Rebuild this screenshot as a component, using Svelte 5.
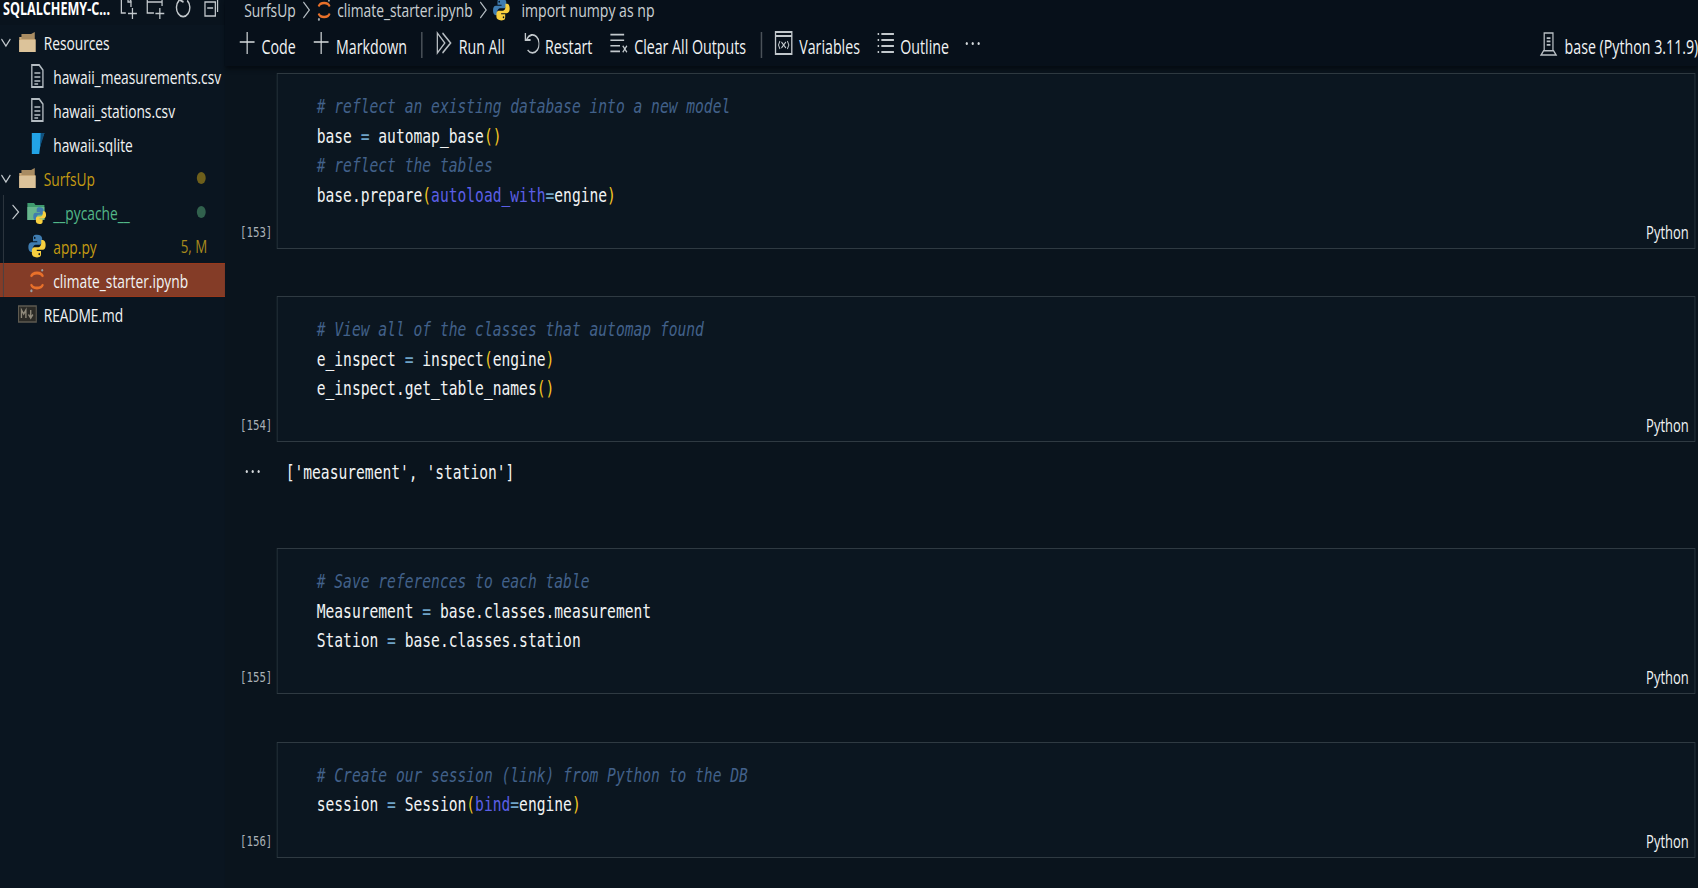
<script>
  const tree = [
    { name: 'Resources', level: 0, icon: 'folder', open: true },
    { name: 'hawaii_measurements.csv', level: 1, icon: 'file' },
    { name: 'hawaii_stations.csv', level: 1, icon: 'file' },
    { name: 'hawaii.sqlite', level: 1, icon: 'db' },
    { name: 'SurfsUp', level: 0, icon: 'folder', open: true, cls: 'mod', dot: 'ymark' },
    { name: '__pycache__', level: 1, icon: 'pyfolder', closed: true, cls: 'untracked', dot: 'gmark' },
    { name: 'app.py', level: 1, icon: 'py', cls: 'mod', badge: '5, M' },
    { name: 'climate_starter.ipynb', level: 1, icon: 'jup', selected: true },
    { name: 'README.md', level: 0, icon: 'md' }
  ];
</script>

{#snippet py(size)}
  <svg width={size} height={size} viewBox="0 0 24 24">
    <path fill="#3f7cb0" d="M12 1.5c-5 0-5 2-5 3.5v2.5h5.300v1H5c-2.500 0-3.800 2-3.800 4.500s1.300 4.500 3.500 4.500h2v-3c0-2 1.700-3.700 3.700-3.700h5c1.600 0 3-1.300 3-3V5c0-2-2.300-3.500-6.400-3.500zM9.200 3.500a1 1 0 1 1 0 2 1 1 0 0 1 0-2z"/>
    <path fill="#f7cf3f" d="M12 22.500c5 0 5-2 5-3.500v-2.500h-5.300v-1H19c2.500 0 3.800-2 3.800-4.500s-1.300-4.500-3.500-4.500h-2v3c0 2-1.700 3.700-3.700 3.700h-5c-1.600 0-3 1.300-3 3V19c0 2 2.300 3.500 6.400 3.500zM14.800 20.500a1 1 0 1 1 0-2 1 1 0 0 1 0 2z"/>
  </svg>
{/snippet}

{#snippet jup(size)}
  <svg width={size} height={size} viewBox="0 0 24 24" fill="none">
    <path stroke="#e8702a" stroke-width="2.600" d="M4.500 8.500c2-4.600 13-4.600 15 0"/>
    <path stroke="#e8702a" stroke-width="2.600" d="M4.500 15.500c2 4.600 13 4.600 15 0"/>
    <circle cx="18.500" cy="2.500" r="1.200" fill="#9aa3a8"/>
    <circle cx="5" cy="21.500" r="1.400" fill="#9aa3a8"/>
  </svg>
{/snippet}

{#snippet folder()}
  <svg width="26" height="24" viewBox="0 0 26 24">
    <path fill="#c9a878" d="M2 7h8l2 2h12v13H2z"/>
    <path fill="#a98c62" d="M5 4h13l5-2v7H5z"/>
    <path fill="#dcc39a" d="M2 10h22v12H2z"/>
  </svg>
{/snippet}

{#snippet fileIcon(name)}
  {#if name === 'folder'}
    {@render folder()}
  {:else if name === 'file'}
    <svg width="24" height="26" viewBox="0 0 24 26" fill="none" stroke="#b4bcc2" stroke-width="1.800">
      <path d="M5 2h10l5 5v17H5z"/>
      <path d="M8.500 10h8M8.500 14h8M8.500 18h8M8.500 21h5" stroke-width="1.500"/>
    </svg>
  {:else if name === 'db'}
    <svg width="24" height="26" viewBox="0 0 24 26">
      <path fill="#22a3e6" d="M5 2h17c-3 5-6 12-7 21H5z"/>
      <path fill="#10507c" d="M17 2h5c-2 6-4 10-6 14z"/>
    </svg>
  {:else if name === 'pyfolder'}
    <span class="pyf">
      <svg width="28" height="28" viewBox="0 0 28 28">
        <path fill="#3f9a6e" d="M1 5h9l2 2h12v15H1z"/>
        <path fill="#68b58d" d="M1 9h23v13H1z"/>
        <g transform="translate(8 8) scale(.8)">
          <path fill="#3f7cb0" d="M12 1.500c-5 0-5 2-5 3.500v2.500h5.300v1H5c-2.500 0-3.800 2-3.800 4.500s1.300 4.500 3.500 4.500h2v-3c0-2 1.700-3.700 3.700-3.700h5c1.600 0 3-1.300 3-3V5c0-2-2.300-3.500-6.400-3.500z"/>
          <path fill="#f7cf3f" d="M12 22.500c5 0 5-2 5-3.500v-2.500h-5.300v-1H19c2.500 0 3.800-2 3.800-4.500s-1.300-4.500-3.500-4.500h-2v3c0 2-1.700 3.700-3.700 3.700h-5c-1.600 0-3 1.300-3 3V19c0 2 2.300 3.500 6.400 3.500z"/>
        </g>
      </svg>
    </span>
  {:else if name === 'py'}
    {@render py(28)}
  {:else if name === 'jup'}
    {@render jup(27)}
  {:else}
    <svg width="26" height="20" viewBox="0 0 26 20">
      <rect x="1" y="2" width="24" height="16" fill="#2b2a26" stroke="#5e5a50" stroke-width="1.500"/>
      <path fill="none" stroke="#8f897b" stroke-width="1.800" d="M5 14V6l3 4 3-4v8M17.500 6v7M14.500 10.500l3 3.500 3-3.500"/>
    </svg>
  {/if}
{/snippet}

<div class="stage">
  <aside class="sidebar">
    <div class="title">
      <span class="title-text">SQLALCHEMY-C...</span>
      <div class="title-actions">
        <svg width="30" height="26" viewBox="0 0 30 26" fill="none" stroke="#c2c8cc" stroke-width="1.700">
          <path d="M11 18H5V2h9l4 4v6M14 2v5h5M20 13v11M14 18.500h12"/>
        </svg>
        <svg width="30" height="26" viewBox="0 0 30 26" fill="none" stroke="#c2c8cc" stroke-width="1.700">
          <path d="M12 18H3V2h7l2 2h11v7M3 7h20M20 13v11M14 18.500h12"/>
        </svg>
        <svg width="30" height="26" viewBox="0 0 30 26" fill="none" stroke="#c2c8cc" stroke-width="1.900">
          <path d="M9 5.500a9 9 0 1 0 11 0M15 0l-5 5 5 2"/>
        </svg>
        <svg width="30" height="26" viewBox="0 0 30 26" fill="none" stroke="#c2c8cc" stroke-width="1.700">
          <path d="M7 7h14v14H7zM11 3h13v14M10 13h8"/>
        </svg>
      </div>
    </div>
    <div class="tree">
      <span class="guide"></span>
      {#each tree as row}
        <div class="row" class:l1={row.level === 1} class:selected={row.selected}>
          <span class="twist">
            {#if row.open}
              <svg width="16" height="16" viewBox="0 0 16 16" fill="none" stroke="#c2c8cc" stroke-width="1.500"><path d="M2 5l6 7 6-7"/></svg>
            {:else if row.closed}
              <svg width="16" height="18" viewBox="0 0 16 18" fill="none" stroke="#c2c8cc" stroke-width="1.500"><path d="M4 2l8 7-8 7"/></svg>
            {/if}
          </span>
          <span class="icon">{@render fileIcon(row.icon)}</span>
          <span class="name {row.cls ?? ''}">{row.name}</span>
          {#if row.dot}<span class="dot {row.dot}"></span>{/if}
          {#if row.badge}<span class="badge">{row.badge}</span>{/if}
        </div>
      {/each}
    </div>
  </aside>

  <main class="main">
    <header class="head">
      <nav class="crumbs">
        <span>SurfsUp</span>
        <svg class="chev" width="12" height="22" viewBox="0 0 12 22" fill="none" stroke="#b4bcc2" stroke-width="1.500"><path d="M2 3l8 8-8 8"/></svg>
        {@render jup(24)}
        <span>climate_starter.ipynb</span>
        <svg class="chev" width="12" height="22" viewBox="0 0 12 22" fill="none" stroke="#b4bcc2" stroke-width="1.500"><path d="M2 3l8 8-8 8"/></svg>
        {@render py(25)}
        <span class="import">import numpy as np</span>
      </nav>
      <div class="toolbar">
        <div class="tool add"><svg width="24" height="26" viewBox="0 0 24 26" fill="none" stroke="#d7dbde" stroke-width="1.600"><path d="M12 2v22M2 12h20"/></svg><span>Code</span></div>
        <div class="tool add"><svg width="24" height="26" viewBox="0 0 24 26" fill="none" stroke="#d7dbde" stroke-width="1.600"><path d="M12 2v22M2 12h20"/></svg><span>Markdown</span></div>
        <i class="sep"></i>
        <div class="tool"><svg width="24" height="26" viewBox="0 0 24 26" fill="none" stroke="#b9bfc4" stroke-width="1.700"><path d="M3 3l10 10L3 23zM10 3l11 10-11 10"/></svg><span>Run All</span></div>
        <div class="tool"><svg width="24" height="26" viewBox="0 0 24 26" fill="none" stroke="#c2c8cc" stroke-width="1.800"><path d="M7 9a9 9 0 1 1 1 11M5 3v7h7"/></svg><span>Restart</span></div>
        <div class="tool"><svg width="26" height="26" viewBox="0 0 28 26" fill="none" stroke="#c2c8cc" stroke-width="1.800"><path d="M2 4h20M2 10h20M2 16h14M2 22h14M20 16l6 7M26 16l-6 7"/></svg><span>Clear All Outputs</span></div>
        <i class="sep"></i>
        <div class="tool"><svg width="26" height="28" viewBox="0 0 26 28" fill="none" stroke="#c2c8cc" stroke-width="1.800"><path d="M2 3h22v22H2zM2 7h22" /><path stroke-width="1.300" d="M8 12l-2 4 2 4M18 12l2 4-2 4M10 13l6 6M16 13l-6 6"/></svg><span>Variables</span></div>
        <div class="tool"><svg width="24" height="26" viewBox="0 0 24 26" fill="none" stroke="#c2c8cc" stroke-width="1.800"><path d="M6 4h17M6 10h17M6 16h17M6 22h17M1 4h2M1 10h2M1 16h2M1 22h2"/></svg><span>Outline</span></div>
        <div class="more" aria-label="More"><b></b><b></b><b></b></div>
        <div class="kernel">
          <svg width="27" height="28" viewBox="0 0 30 30" fill="none" stroke="#b9bfc4" stroke-width="2">
            <path d="M8 2h14v21H8zM3 28l4-5h16l4 5zM12 8h6M12 12h6M12 16h6"/>
          </svg>
          <span>base (Python 3.11.9)</span>
        </div>
      </div>
    </header>

    <div class="notebook">
      <section class="cellrow">
        <span class="count">[153]</span>
        <div class="cell">
          <pre class="code"><em># reflect an existing database into a new model</em>
base <u>=</u> automap_base<s>()</s>
<em># reflect the tables</em>
base.prepare<s>(</s><dfn>autoload_with</dfn><u>=</u>engine<s>)</s></pre>
          <span class="lang">Python</span>
        </div>
      </section>

      <section class="cellrow">
        <span class="count">[154]</span>
        <div class="cell">
          <pre class="code"><em># View all of the classes that automap found</em>
e_inspect <u>=</u> inspect<s>(</s>engine<s>)</s>
e_inspect.get_table_names<s>()</s></pre>
          <span class="lang">Python</span>
        </div>
      </section>

      <div class="output">
        <span class="outdots"><b></b><b></b><b></b></span>
        <pre class="outtext">['measurement', 'station']</pre>
      </div>

      <section class="cellrow">
        <span class="count">[155]</span>
        <div class="cell">
          <pre class="code"><em># Save references to each table</em>
Measurement <u>=</u> base.classes.measurement
Station <u>=</u> base.classes.station</pre>
          <span class="lang">Python</span>
        </div>
      </section>

      <section class="cellrow">
        <span class="count">[156]</span>
        <div class="cell">
          <pre class="code"><em># Create our session (link) from Python to the DB</em>
session <u>=</u> Session<s>(</s><dfn>bind</dfn><u>=</u>engine<s>)</s></pre>
          <span class="lang">Python</span>
        </div>
      </section>
    </div>
  </main>
</div>

<style>
  :global(html), :global(body) {
    margin: 0;
    height: 100%;
    overflow: hidden;
    background: #0a141d;
  }
  .stage {
    width: 2295px;
    height: 888px;
    transform: scaleX(0.74);
    transform-origin: 0 0;
    display: flex;
    background: #0a141d;
    color: #f1f3f4;
    font-family: "Open Sans", "Noto Sans", sans-serif;
    font-size: 18.6px;
    overflow: hidden;
  }
  .sidebar {
    width: 304px;
    flex: none;
    background: #0a1520;
  }
  .title {
    height: 25px;
    display: flex;
    align-items: center;
    padding-left: 4px;
    overflow: hidden;
    background: #09131d;
  }
  .title-text {
    font-weight: 700;
    font-size: 17px;
    color: #fff;
    width: 155px;
    flex: none;
    margin-top: -9px;
    white-space: nowrap;
  }
  .title-actions {
    display: flex;
    gap: 7px;
    margin-top: -9px;
  }
  .tree {
    position: relative;
  }
  .guide {
    position: absolute;
    left: 4px;
    top: 170px;
    height: 102px;
    width: 1px;
    background: #39424a;
  }
  .row {
    height: 34px;
    display: flex;
    align-items: center;
    white-space: nowrap;
    box-sizing: border-box;
  }
  .l1 {
    padding-left: 13px;
  }
  .selected {
    background: #843c27;
    border-top: 1px solid #98391c;
    border-bottom: 1px solid #98391c;
  }
  .twist {
    width: 24px;
    flex: none;
    display: flex;
  }
  .icon {
    width: 26px;
    height: 28px;
    flex: none;
    display: flex;
    align-items: center;
    justify-content: center;
    margin-right: 9px;
  }
  .pyf {
    display: flex;
  }
  .name {
    flex: 1;
  }
  .mod {
    color: #c39a12;
  }
  .untracked {
    color: #52b788;
  }
  .dot {
    width: 12px;
    height: 12px;
    border-radius: 50%;
    margin-right: 26px;
  }
  .ymark {
    background: #6e5f1b;
  }
  .gmark {
    background: #31614d;
  }
  .badge {
    color: #a88a1c;
    font-size: 18px;
    margin-right: 24px;
  }
  .main {
    flex: 1;
    min-width: 0;
    display: flex;
    flex-direction: column;
  }
  .head {
    background: #07101a;
    box-shadow: 0 3px 5px #050b11;
    height: 66px;
    flex: none;
    position: relative;
    z-index: 1;
  }
  .crumbs {
    height: 19px;
    padding-left: 26px;
    display: flex;
    align-items: center;
    gap: 6px;
    color: #c9cfd3;
    white-space: nowrap;
    font-size: 18.7px;
  }
  .chev {
    margin-left: 2px;
  }
  .import {
    margin-left: 9px;
    font-size: 19px;
  }
  .toolbar {
    height: 47px;
    padding: 5px 0 0 17.500px;
    box-sizing: border-box;
    display: flex;
    align-items: center;
    white-space: nowrap;
    gap: 22.500px;
    font-size: 19.2px;
  }
  .tool {
    display: flex;
    align-items: center;
    gap: 8px;
  }
  .tool span {
    margin-top: 3px;
  }
  .tool svg {
    margin-top: -4px;
  }
  .sep {
    width: 2px;
    height: 26px;
    background: #4a5259;
    margin: 0 -6px 0 -3px;
  }
  .more, .outdots {
    display: flex;
    gap: 5px;
    margin-top: -4px;
  }
  .more b, .outdots b {
    width: 3px;
    height: 3px;
    background: #d5d9dc;
    border-radius: 50%;
  }
  .kernel {
    margin-left: auto;
    display: flex;
    align-items: center;
    gap: 9px;
    flex: none;
    width: 215px;
  }
  .kernel svg {
    margin-top: -3px;
  }
  .kernel span {
    margin-top: 3px;
  }
  .notebook {
    padding-top: 7px;
    display: flex;
    flex-direction: column;
    padding-right: 4px;
  }
  .cellrow {
    display: flex;
    align-items: flex-end;
    margin-bottom: 47.500px;
  }
  .count {
    width: 70px;
    flex: none;
    font: 14.500px "DejaVu Sans Mono", monospace;
    color: #a9b1b6;
    text-align: right;
    padding: 0 6px 9px 0;
    box-sizing: border-box;
  }
  .cell {
    flex: 1;
    display: flex;
    justify-content: space-between;
    align-items: flex-end;
    background: #0b1620;
    border: 1.500px solid #2f3a42;
    padding: 18px 8px 0 53px;
    box-sizing: border-box;
  }
  .code, .outtext {
    margin: 0;
    font: 19.750px/29.500px "DejaVu Sans Mono", monospace;
    color: #f1f3f4;
    padding-bottom: 37.500px;
  }
  .code em {
    color: #42618a;
    font-style: italic;
  }
  .code u {
    color: #6fa3c7;
    text-decoration: none;
  }
  .code s {
    color: #f2c522;
    text-decoration: none;
  }
  .code dfn {
    color: #5b5fe6;
    font-style: normal;
  }
  .lang {
    font-size: 17.5px;
    padding-bottom: 4px;
  }
  .output {
    display: flex;
    align-items: center;
    height: 62px;
    margin-top: -47.500px;
    margin-bottom: 44px;
  }
  .outdots {
    margin-left: 28px;
    width: 19px;
    margin-right: 35px;
    margin-top: -3px;
    flex: none;
  }
  .outtext {
    padding: 0;
  }
</style>
